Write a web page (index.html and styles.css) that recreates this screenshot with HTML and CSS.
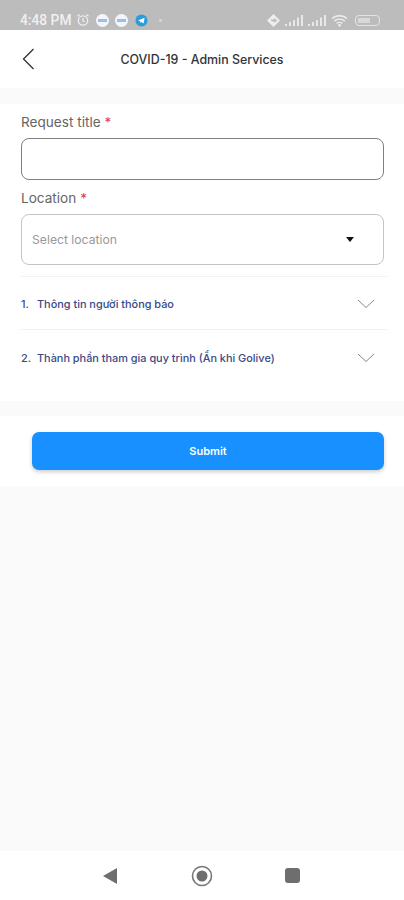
FILE: index.html
```html
<!DOCTYPE html>
<html lang="vi">
<head>
  <meta charset="UTF-8">
  <meta name="viewport" content="width=device-width, initial-scale=1.0">
  <title>COVID-19 - Admin Services</title>
  <link rel="stylesheet" href="styles.css">
</head>
<body>
  <div class="app">
    <div class="status-bar">
      <span class="status-time">4:48 PM</span>
      <svg class="status-icon" width="14" height="14" viewBox="0 0 14 14" fill="none" stroke="#eee" stroke-width="1.3">
        <circle cx="7" cy="7.5" r="4.7"/>
        <path d="M7 5v2.7l1.6 1M1.5 3.2 3.6 1.4M12.5 3.2 10.4 1.4"/>
      </svg>
      <span class="status-app"><i></i></span>
      <span class="status-app"><i></i></span>
      <svg class="status-icon tg" width="13" height="13" viewBox="0 0 13 13">
        <circle cx="6.5" cy="6.5" r="6" fill="#2a9bdc"/>
        <path d="M3 6.4 9.6 3.8 8.6 9.4 6.6 7.9 5.5 8.9 5.3 7.3Z" fill="#fff"/>
      </svg>
      <span class="status-dot"></span>
      <span class="status-right">
        <svg width="13" height="13" viewBox="0 0 13 13">
          <path d="M6.5 0 13 6.5 6.5 13 0 6.5Z" fill="#eee"/>
          <path d="M4 7V5.5h3.5V4L10 6.5 7.5 9V7.5H5.2V7Z" fill="#bbb"/>
        </svg>
        <svg width="19" height="11" viewBox="0 0 19 11" fill="#e8e8e8">
          <rect x="0" y="9" width="2" height="2"/><rect x="4" y="7" width="2" height="4"/><rect x="8" y="5" width="2" height="6"/><rect x="12" y="2.500" width="2" height="8.500"/><rect x="16" y="0" width="2" height="11"/>
        </svg>
        <svg width="19" height="11" viewBox="0 0 19 11" fill="#e8e8e8">
          <rect x="0" y="9" width="2" height="2"/><rect x="4" y="7" width="2" height="4"/><rect x="8" y="5" width="2" height="6"/><rect x="12" y="2.500" width="2" height="8.500"/><rect x="16" y="0" width="2" height="11"/>
        </svg>
        <svg width="17" height="13" viewBox="0 0 17 13" fill="none" stroke="#eee" stroke-width="1.400">
          <path d="M1 4.500C5 .8 12 .8 16 4.500M3.200 7C6 4.500 11 4.500 13.800 7M5.500 9.300C7 8 10 8 11.500 9.300"/>
          <circle cx="8.500" cy="11.300" r=".7" fill="#eee"/>
        </svg>
        <span class="battery"><i></i></span>
      </span>
    </div>

    <header class="top-bar">
      <svg class="back-icon" width="14" height="22" viewBox="0 0 14 22" fill="none" stroke="#333" stroke-width="1.300">
        <path d="M11.500 1 1.500 11 11.500 21"/>
      </svg>
      <h1 class="top-title">COVID-19 - Admin Services</h1>
    </header>

    <form class="card form-card">
      <label class="field-label">Request title <span class="req">*</span></label>
      <div class="text-box"></div>
      <label class="field-label label-second">Location <span class="req">*</span></label>
      <div class="select-box">
        <span class="select-text">Select location</span>
        <span class="caret"></span>
      </div>
      <div class="section-row first-row">
        <span class="section-name"><span class="section-num">1.</span>Thông tin người thông báo</span>
        <svg class="chev" width="18" height="10" viewBox="0 0 18 10" fill="none" stroke="#888" stroke-width="1">
          <path d="M1 1 9 8.500 17 1"/>
        </svg>
      </div>
      <div class="section-row">
        <span class="section-name"><span class="section-num">2.</span>Thành phần tham gia quy trình (Ẩn khi Golive)</span>
        <svg class="chev" width="18" height="10" viewBox="0 0 18 10" fill="none" stroke="#888" stroke-width="1">
          <path d="M1 1 9 8.500 17 1"/>
        </svg>
      </div>
    </form>

    <div class="card submit-card">
      <button class="submit-btn" type="button">Submit</button>
    </div>

    <div class="spacer"></div>

    <nav class="nav-bar">
      <svg width="16" height="18" viewBox="0 0 16 18"><path d="M15 1V17L1 9Z" fill="#6e6e6e"/></svg>
      <svg width="22" height="22" viewBox="0 0 22 22">
        <circle cx="11" cy="11" r="9.500" fill="none" stroke="#777" stroke-width="1.600"/>
        <circle cx="11" cy="11" r="5.500" fill="#6e6e6e"/>
      </svg>
      <span class="nav-square"></span>
    </nav>
  </div>
</body>
</html>
```

FILE: styles.css
```css
* {
  box-sizing: border-box;
}
body {
  margin: 0;
  font-family: Inter, Roboto, Arial, sans-serif;
  background-color: #fafafa;
}
.app {
  display: flex;
  flex-direction: column;
  height: 900px;
  width: 404px;
  overflow: hidden;
}
.status-bar {
  display: flex;
  align-items: center;
  height: 30px;
  padding: 10px 24px 0 20px;
  background-color: #bcbcbc;
  color: #f0f0f0;
}
.status-time {
  font-family: Roboto, Arial, sans-serif;
  font-size: 13.800px;
  font-weight: 500;
  margin-right: 5px;
}
.status-app {
  display: flex;
  align-items: center;
  justify-content: center;
  width: 13px;
  height: 13px;
  margin-left: 6px;
  border-radius: 50%;
  background-color: #f2f6fb;
}
.status-app i {
  display: block;
  width: 9px;
  height: 3px;
  background-color: #9dbde4;
}
.status-icon.tg {
  margin-left: 7px;
}
.status-dot {
  width: 3px;
  height: 3px;
  margin-left: 11px;
  border-radius: 50%;
  background-color: #d8d8d8;
}
.status-right {
  display: flex;
  align-items: center;
  gap: 4px;
  margin-left: auto;
}
.status-right svg:first-child {
  margin-right: 1px;
}
.battery {
  display: block;
  width: 25px;
  height: 11px;
  margin-left: 3px;
  padding: 2px;
  border: 1px solid #e4e4e4;
  border-radius: 4px;
}
.battery i {
  display: block;
  width: 12px;
  height: 5px;
  background-color: #d8d8d8;
}
.top-bar {
  position: relative;
  display: flex;
  align-items: center;
  justify-content: center;
  height: 58px;
  background-color: #fff;
}
.back-icon {
  position: absolute;
  left: 22px;
  top: 18px;
}
.top-title {
  margin: 0;
  font-size: 12.400px;
  font-weight: 500;
  color: #333;
}
.card {
  background-color: #fff;
}
.form-card {
  margin-top: 16px;
  height: 297px;
  padding: 10px 17px 0 21px;
}
.field-label {
  display: block;
  height: 17px;
  line-height: 17px;
  font-size: 13.600px;
  color: #666;
}
.req {
  color: #e2403f;
}
.text-box {
  width: 363px;
  height: 42px;
  margin-top: 7px;
  border: 1px solid #808080;
  border-radius: 8px;
}
.label-second {
  margin-top: 10px;
}
.select-box {
  display: flex;
  align-items: center;
  justify-content: space-between;
  width: 363px;
  height: 51px;
  margin-top: 7px;
  padding: 0 29px 0 10px;
  border: 1px solid #c4c4c4;
  border-radius: 8px;
}
.select-text {
  font-size: 12.200px;
  color: #999;
}
.caret {
  width: 0;
  height: 0;
  border-left: 4.500px solid transparent;
  border-right: 4.500px solid transparent;
  border-top: 5px solid #111;
}
.section-row {
  display: flex;
  align-items: center;
  justify-content: space-between;
  height: 54px;
  padding: 1px 12px 0 0;
  border-bottom: 1px solid #f2f2f2;
}
.section-row:last-child {
  border-bottom: none;
}
.first-row {
  margin-top: 11px;
  border-top: 1px solid #f2f2f2;
}
.section-name {
  display: flex;
  font-size: 10.900px;
  font-weight: 500;
  color: #3a4a85;
}
.section-num {
  width: 16px;
}
.submit-card {
  margin-top: 15px;
  height: 70px;
  padding: 16px 20px 0 32px;
}
.submit-btn {
  display: block;
  width: 352px;
  height: 38px;
  border: none;
  border-radius: 7px;
  background-color: #1890ff;
  color: #fff;
  font-family: inherit;
  font-size: 11px;
  font-weight: 600;
  box-shadow: 0 2px 4px rgba(0, 0, 0, 0.2);
}
.spacer {
  flex: 1;
}
.nav-bar {
  display: flex;
  align-items: center;
  justify-content: space-between;
  height: 49px;
  padding: 0 104px 0 102px;
  background-color: #fff;
}
.nav-square {
  display: block;
  width: 15px;
  height: 15px;
  border-radius: 3px;
  background-color: #6e6e6e;
}
```
